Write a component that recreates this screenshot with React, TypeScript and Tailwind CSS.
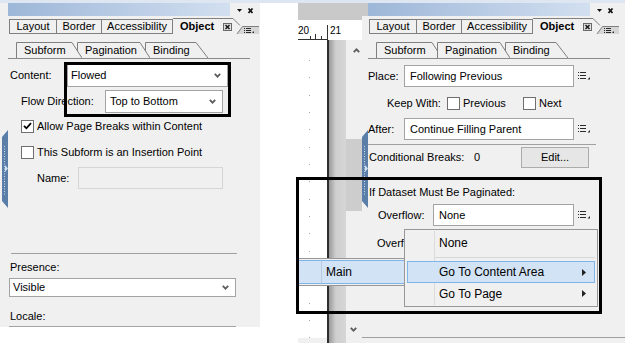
import React from "react";

const ChevronDown = () => (
  <svg width="7" height="5" viewBox="0 0 7 5">
    <path d="M0.8 0.8 L3.5 3.6 L6.2 0.8" fill="none" stroke="#5c5c5c" strokeWidth="1.8" />
  </svg>
);

const ListIcon = ({ className = "" }: { className?: string }) => (
  <svg className={className} width="12" height="8" viewBox="0 0 12 8">
    <g fill="#2b2b2b">
      <rect x="0" y="0" width="1" height="1" />
      <rect x="0" y="3" width="1" height="1" />
      <rect x="0" y="6" width="1" height="1" />
      <rect x="2" y="0" width="6" height="1" />
      <rect x="2" y="3" width="6" height="1" />
      <rect x="2" y="6" width="6" height="1" />
      <path d="M9.5 7.5 L12 7.5 L12 5 Z" />
    </g>
  </svg>
);

const Checkbox = ({ checked }: { checked?: boolean }) => (
  <span className="flex items-center justify-center w-[13px] h-[13px] border border-[#6f6f6f] bg-white shrink-0">
    {checked && (
      <svg width="9" height="8" viewBox="0 0 9 8">
        <path d="M1 3.8 L3.4 6.3 L8 1.2" fill="none" stroke="#000" strokeWidth="1.8" />
      </svg>
    )}
  </span>
);

const Select = ({ value, className }: { value: string; className: string }) => (
  <div className={`flex items-center justify-between bg-white border border-[#a3a3a3] pl-[3px] pr-[6px] ${className}`}>
    <span>{value}</span>
    <ChevronDown />
  </div>
);

const Field = ({ value, className }: { value: string; className: string }) => (
  <div className={`flex items-center bg-white border border-[#a3a3a3] pl-[5px] ${className}`}>{value}</div>
);

const SubTab = ({ label, w, top, className }: { label: string; w: number; top: number; className: string }) => (
  <div className={`relative h-[16px] shrink-0 ${className}`}>
    <svg className="absolute left-0 top-0" width={w} height={16} viewBox={`0 0 ${w} 16`}>
      <path d={`M0.5 16 V0.5 H${top} L${w} 16`} fill="#f0f0f0" stroke="#7f7f7f" />
    </svg>
    <span className="relative block pl-[8px] leading-[16px]">{label}</span>
  </div>
);

// gradient caption strip of the docked palette
const TitleStrip = ({ id }: { id: string }) => (
  <svg className="shrink-0" width="222" height="13" viewBox="0 0 222 13">
    <defs>
      <linearGradient id={id} x1="0" y1="0" x2="1" y2="0">
        <stop offset="0" stopColor="#9db7d8" />
        <stop offset="1" stopColor="#d2dff0" />
      </linearGradient>
    </defs>
    <rect width="222" height="13" fill={`url(#${id})`} />
  </svg>
);

const PanelHeader = ({ active, lead }: { active: "Subform" | "Pagination"; lead?: boolean }) => (
  <>
    {/* title bar */}
    <div className="flex h-[15px] items-start">
      {lead ? (
        <svg className="shrink-0" width="8" height="13" viewBox="0 0 8 13">
          <rect width="8" height="13" fill="#c9c9c9" />
        </svg>
      ) : (
        <div className="w-[8px] shrink-0" />
      )}
      <TitleStrip id={lead ? "tg-right" : "tg-left"} />
      <svg className="ml-[7px] mt-[5px] shrink-0" width="17" height="6" viewBox="0 0 17 6">
        <path d="M0 1 H5 L2.5 4 Z" fill="#111" />
        <path d="M11.5 0.5 L15.5 5 M15.5 0.5 L11.5 5" stroke="#111" strokeWidth="1.7" />
      </svg>
    </div>

    {/* main tabs */}
    <div className="flex h-[16px] pl-[9px]">
      <div className="flex mt-[1px] h-[15px] border-y border-l border-[#7f7f7f]">
        <span className="w-[47px] border-r border-[#7f7f7f] flex items-center justify-center">Layout</span>
        <span className="w-[45px] border-r border-[#7f7f7f] flex items-center justify-center">Border</span>
        <span className="w-[71px] border-r border-[#7f7f7f] flex items-center justify-center">Accessibility</span>
      </div>
      <div className="flex items-center w-[60px] h-[16px] border-t border-[#7f7f7f] pl-[7px] gap-[9px] font-bold">
        Object
        <svg width="9" height="8" viewBox="0 0 9 8">
          <rect x="0.5" y="0.5" width="8" height="7" fill="#dcdcdc" stroke="#6a6a6a" />
          <path d="M2.5 2 L6.5 6 M6.5 2 L2.5 6" stroke="#111" strokeWidth="1.4" />
        </svg>
      </div>
      <svg width="26" height="16" viewBox="0 0 26 16">
        <path d="M0 0.5 L7 7.5" stroke="#7f7f7f" fill="none" />
        <path d="M4 16 L9.5 8.5 H26 V16 Z" fill="#d6d6d6" />
        <path d="M4 16 L9.5 8.5 H26" stroke="#7f7f7f" fill="none" />
        <g fill="#2b2b2b">
          <rect x="11" y="10" width="1" height="1" />
          <rect x="11" y="12" width="1" height="1" />
          <rect x="11" y="14" width="1" height="1" />
          <rect x="13" y="10" width="5" height="1" />
          <rect x="13" y="12" width="5" height="1" />
          <rect x="13" y="14" width="5" height="1" />
          <path d="M19 15 L21 15 L21 13 Z" />
        </g>
      </svg>
    </div>

    {/* sub tabs */}
    <div className="flex mt-[8px] ml-[8px] w-[242px] h-[17px] border-b border-[#8a8a8a] pl-[8px]">
      <SubTab label="Subform" w={66} top={56} className={active === "Subform" ? "w-[66px] z-10" : "w-[66px] z-[3]"} />
      <SubTab label="Pagination" w={73} top={63} className={active === "Pagination" ? "w-[73px] -ml-[5px] z-10" : "w-[73px] -ml-[5px] z-[2]"} />
      <SubTab label="Binding" w={63} top={51} className="w-[63px] -ml-[5px] z-[1]" />
    </div>
  </>
);

const Handle = ({ className }: { className: string }) => (
  <svg className={className} width="7" height="78" viewBox="0 0 7 78">
    <path d="M7 0 V78 L1 71 V7 Z" fill="#5a7ea8" />
    <g fill="#c9d9ec">
      {Array.from({ length: 20 }).map((_, i) => (
        <rect key={i} x="3" y={16 + i * 2.5} width="1" height="1" />
      ))}
    </g>
    <path d="M4 35 L7 38.5 L4 42 Z" fill="#cfe0f3" />
  </svg>
);

const LeftPanel = () => (
  <div className="w-[260px] h-[324px] bg-[#f0f0f0] overflow-hidden flex flex-col shrink-0 *:shrink-0">
    <PanelHeader active="Subform" />
    <div className="flex items-center h-[23px] mt-[5px]">
      <span className="w-[67px] pl-[10px]">Content:</span>
      <Select value="Flowed" className="w-[161px] h-[23px]" />
    </div>
    <div className="flex items-center h-[23px] mt-[3px]">
      <span className="w-[105px] pl-[21px]">Flow Direction:</span>
      <Select value="Top to Bottom" className="w-[118px] h-[23px] pl-[4px]" />
    </div>
    <div className="flex items-center h-[14px] mt-[6px] ml-[21px] gap-[3px]">
      <Checkbox checked />
      <span>Allow Page Breaks within Content</span>
    </div>
    <div className="flex items-center h-[14px] mt-[12px] ml-[21px] gap-[3px]">
      <Checkbox />
      <span>This Subform is an Insertion Point</span>
    </div>
    <div className="flex items-center h-[22px] mt-[8px]">
      <span className="w-[78px] pl-[37px]">Name:</span>
      <div className="w-[145px] h-[22px] border border-[#d6d6d6] bg-[#f0f0f0]" />
    </div>
    <div className="mt-[64px] ml-[11px] w-[226px] h-px bg-[#a0a0a0]" />
    <span className="mt-[7px] pl-[10px] leading-[13px]">Presence:</span>
    <Select value="Visible" className="mt-[4px] ml-[9px] w-[227px] h-[19px]" />
    <span className="mt-[13px] pl-[10px] leading-[13px]">Locale:</span>
    <div className="mt-[3px] ml-[9px] w-[227px] h-[19px] bg-white border border-[#a3a3a3]" />
  </div>
);

const Editor = () => (
  <div className="w-[64px] flex flex-col shrink-0 *:shrink-0">
    <svg width="64" height="17" viewBox="0 0 64 17">
      <rect width="64" height="17" fill="#c9c9c9" />
    </svg>
    <div className="relative h-[20px] bg-white overflow-hidden">
      <svg className="absolute left-0 top-0" width="64" height="20" viewBox="0 0 64 20">
        <g fill="#333">
          <rect x="0" y="19" width="30" height="1" />
          <rect x="12" y="16" width="1" height="3" />
          <rect x="17" y="14" width="1" height="5" />
          <rect x="23" y="16" width="1" height="3" />
          <rect x="29" y="5" width="1" height="15" />
        </g>
      </svg>
      <span className="absolute left-[0px] top-[6px] text-[10px] leading-none">20</span>
      <span className="absolute left-[32px] top-[6px] text-[10px] leading-none">21</span>
    </div>
    <div className="flex h-[303px]">
      <div className="w-[29px] flex flex-col">
        <div className="h-[298px] bg-white flex flex-col gap-[16.5px] pt-[20px] pl-[11px]">
          {Array.from({ length: 17 }).map((_, i) => (
            <div key={i} className="w-px h-px bg-[#a8a8a8]" />
          ))}
        </div>
        <div className="flex-1 bg-[#f0f0f0]" />
      </div>
      <div className="w-[2px] bg-[#2e2e2e]" />
      <div className="w-[17px] bg-[#d0d0d0] bg-linear-to-r from-[#9a9a9a] via-[#cfcfcf] via-40% to-[#d6d6d6]" />
      <div className="w-[16px] flex flex-col">
        <div className="h-[298px] bg-[#f0f0f0] flex flex-col items-center">
          <svg className="mt-[8px] ml-[4px]" width="7" height="5" viewBox="0 0 7 5">
            <path d="M0.8 4.2 L3.5 1.4 L6.2 4.2" fill="none" stroke="#5c5c5c" strokeWidth="1.8" />
          </svg>
          <div className="mt-[86px] w-full h-[72px] bg-[#cdcdcd]" />
          <div className="mt-auto mb-[6px] ml-[-2px]">
            <ChevronDown />
          </div>
        </div>
        <div className="flex-1 bg-[#f0f0f0]" />
      </div>
    </div>
  </div>
);

const RightPanel = () => (
  <div className="w-[263px] flex flex-col shrink-0">
    <div className="h-[335px] bg-[#f0f0f0] border-b border-[#a0a0a0] overflow-hidden flex flex-col *:shrink-0">
      <div className="-ml-[2px] flex flex-col *:shrink-0">
        <PanelHeader active="Pagination" lead />
      </div>
      <div className="flex items-center h-[22px] mt-[6px]">
        <span className="w-[42px] pl-[6px]">Place:</span>
        <Field value="Following Previous" className="w-[170px] h-[22px]" />
        <ListIcon className="ml-[4px]" />
      </div>
      <div className="flex items-center h-[14px] mt-[9px]">
        <span className="ml-[25px] w-[60px]">Keep With:</span>
        <Checkbox />
        <span className="ml-[3px] w-[60px]">Previous</span>
        <Checkbox />
        <span className="ml-[3px]">Next</span>
      </div>
      <div className="flex items-center h-[22px] mt-[8px]">
        <span className="w-[42px] pl-[6px]">After:</span>
        <Field value="Continue Filling Parent" className="w-[170px] h-[22px]" />
        <ListIcon className="ml-[4px]" />
      </div>
      <div className="mt-[4px] ml-[6px] w-[228px] h-px bg-[#a0a0a0]" />
      <div className="flex items-center h-[21px] mt-[2px]">
        <span className="w-[112px] pl-[7px]">Conditional Breaks:</span>
        <span className="w-[47px]">0</span>
        <button className="w-[68px] h-[21px] border border-[#acacac] bg-[#e6e6e6] text-center">Edit...</button>
      </div>
      <span className="mt-[18px] pl-[7px] leading-[13px]">If Dataset Must Be Paginated:</span>
      <div className="flex items-center h-[22px] mt-[5px]">
        <span className="w-[71px] pl-[16px]">Overflow:</span>
        <Field value="None" className="w-[141px] h-[22px]" />
        <ListIcon className="ml-[4px]" />
      </div>
      <span className="mt-[11px] pl-[15px] whitespace-nowrap leading-[13px]">Overflow Leader:</span>
    </div>
    <div className="h-[5px] bg-[#f0f0f0]" />
  </div>
);

const Arrow = () => (
  <svg width="4" height="7" viewBox="0 0 4 7">
    <path d="M0 0 L4 3.5 L0 7 Z" fill="#222" />
  </svg>
);

const PopupMenu = () => (
  <div className="absolute left-[404px] top-[229px] w-[194px] h-[78px] bg-[#f0f0f0] border border-[#979797] p-[2px] text-[12px]">
    <div className="absolute left-[29px] top-[1px] bottom-[1px] w-px bg-[#dcdcdc]" />
    <div className="relative flex items-center h-[22px] border border-transparent pl-[31px]">None</div>
    <div className="relative h-[7px] flex items-center pl-[28px]">
      <div className="w-full h-px bg-[#d7d7d7]" />
    </div>
    <div className="relative flex items-center justify-between h-[22px] border border-[#7eb4ea] bg-[#d1e3f5] pl-[31px] pr-[8px]">
      <span>Go To Content Area</span>
      <Arrow />
    </div>
    <div className="relative flex items-center justify-between h-[21px] border border-transparent pl-[31px] pr-[8px]">
      <span>Go To Page</span>
      <Arrow />
    </div>
  </div>
);

const SubMenu = () => (
  <div className="absolute left-[296px] top-[258px] w-[111px] h-[28px] bg-[#f0f0f0] border border-[#979797] p-[1px] text-[12px]">
    <div className="relative flex items-center h-[24px] border border-[#7eb4ea] bg-[#d1e3f5] pl-[27px]">
      <div className="absolute left-[22px] top-0 bottom-0 w-px bg-[#b9cbe0]" />
      Main
    </div>
  </div>
);

export default function App() {
  return (
    <div className="relative w-[625px] h-[343px] overflow-hidden bg-white text-[11px] text-black font-['Liberation_Sans',Arial,sans-serif]">
      <div className="h-[3px] bg-[#dde6f1]" />
      <div className="flex h-[340px]">
        <LeftPanel />
        <div className="w-[38px] shrink-0" />
        <Editor />
        <RightPanel />
      </div>

      <Handle className="absolute left-[1px] top-[130px]" />
      <Handle className="absolute left-[361px] top-[130px]" />

      <SubMenu />
      <PopupMenu />

      {/* highlight boxes */}
      <div className="absolute left-[64px] top-[62px] w-[167px] h-[55px] border-[3px] border-black" />
      <div className="absolute left-[296px] top-[177px] w-[306px] h-[137px] border-[3px] border-black" />
    </div>
  );
}
